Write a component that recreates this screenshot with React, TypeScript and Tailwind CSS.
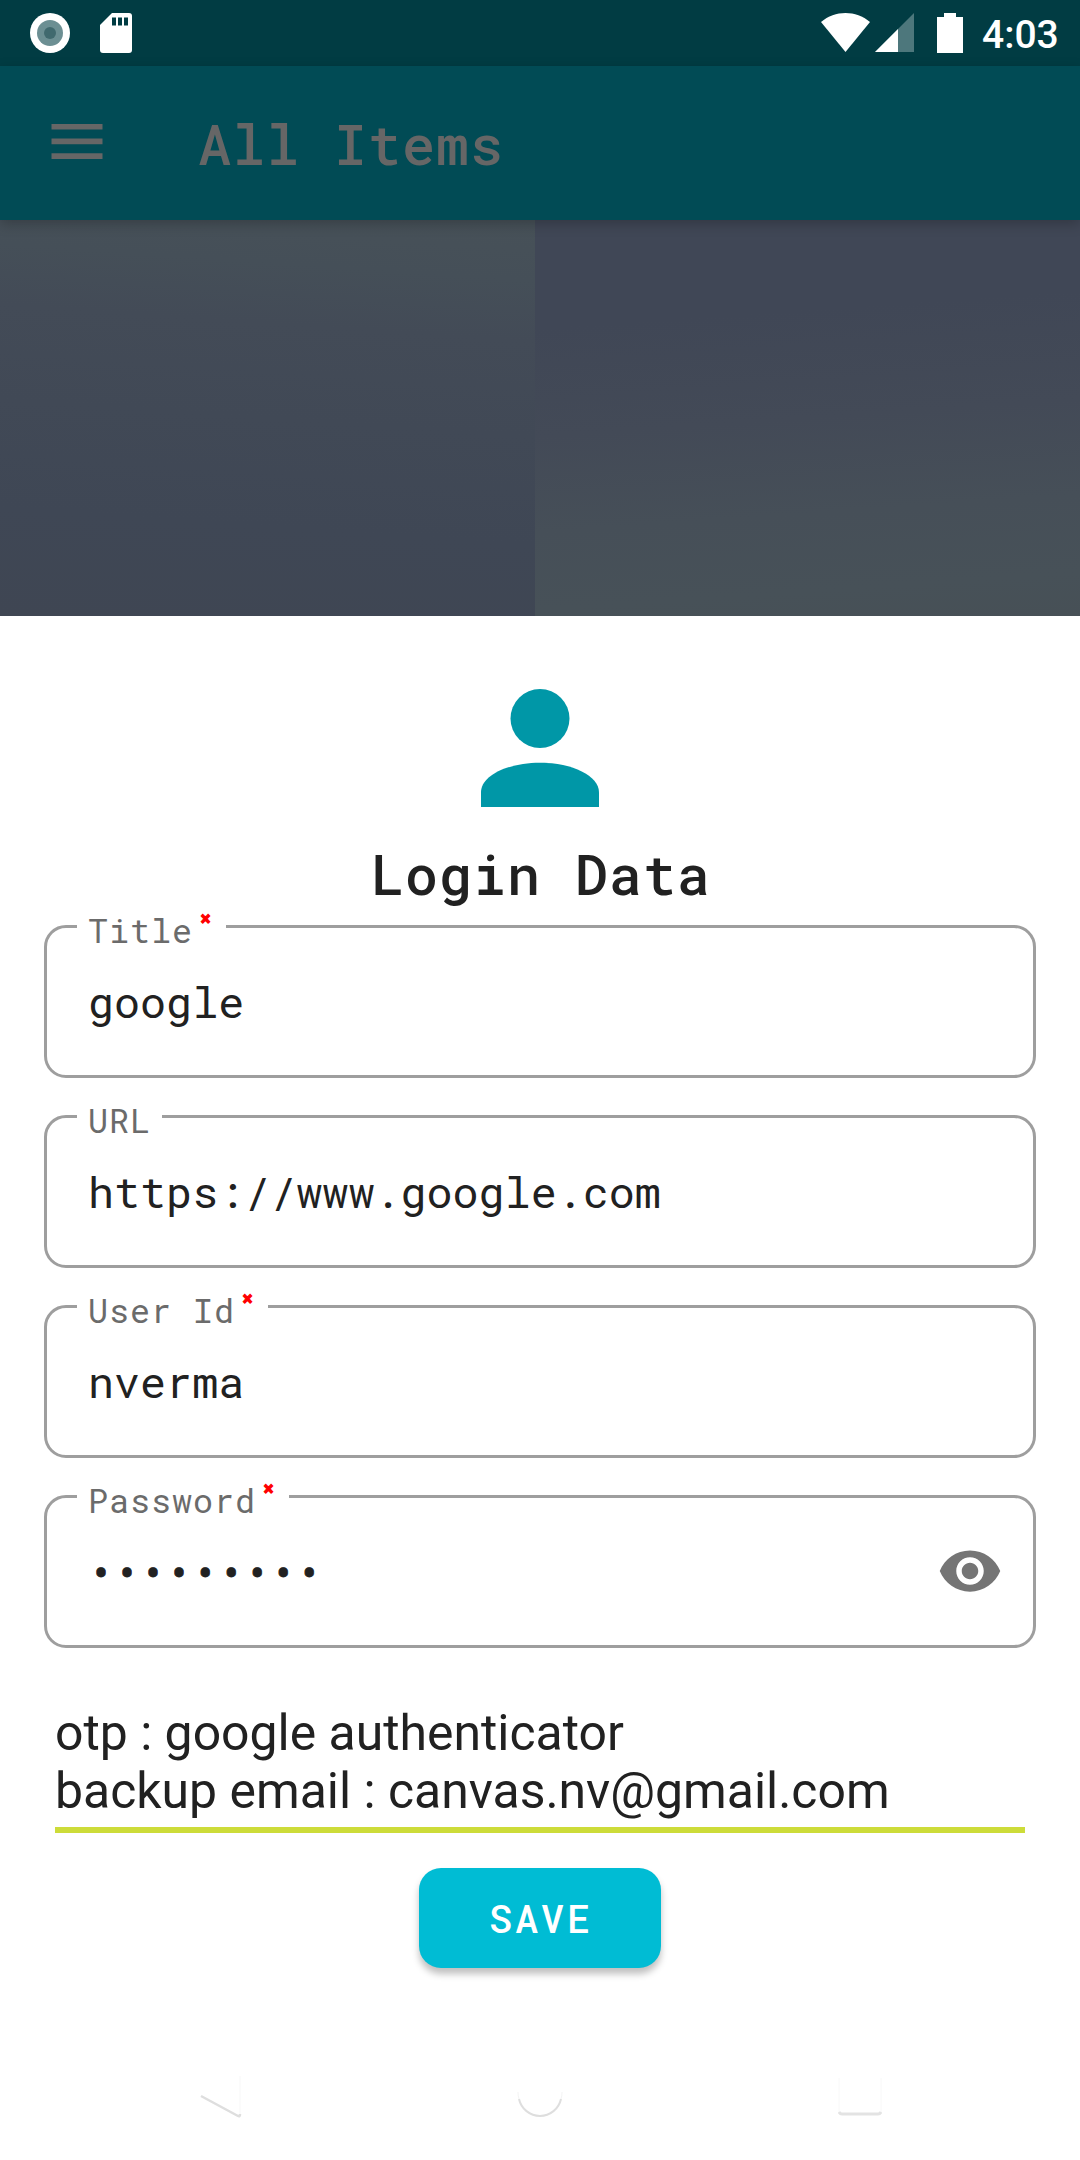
import type { ReactNode } from "react";

function StatusBar() {
  return (
    <div className="flex h-[66px] items-start bg-[#013c43] pt-[13px] pl-[30px] text-white">
      <svg className="h-10 w-10" viewBox="0 0 40 40">
        <circle cx="20" cy="20" r="20" fill="#fff" />
        <circle cx="20" cy="20" r="13" fill="#6c8f93" />
        <circle cx="20" cy="20" r="6" fill="#40696e" />
      </svg>
      <svg className="ml-[30px] h-10 w-8" viewBox="0 0 32 40">
        <path d="M12 0h17a3 3 0 0 1 3 3v34a3 3 0 0 1-3 3H3a3 3 0 0 1-3-3V12z" fill="#fff" />
        <path d="M12 4.500h4v8h-4zM18 4.500h4v8h-4zM24 4.500h4v8h-4z" fill="#013c43" />
      </svg>
      <svg className="ml-[689px] h-10 w-[49px]" viewBox="0 0 49 40">
        <path d="M0 9C14-3 35-3 49 9L24.500 39z" fill="#fff" />
      </svg>
      <svg className="ml-[5px] h-10 w-[39px]" viewBox="0 0 39 40">
        <path d="M39 0v39H0z" fill="#4d777c" />
        <path d="M23 16v23H0z" fill="#fff" />
      </svg>
      <svg className="ml-[23px] h-10 w-[26px]" viewBox="0 0 26 40">
        <path d="M7 0h12v4h7v36H0V4h7z" fill="#fff" />
      </svg>
      <span className="ml-[19px] pt-px font-['Roboto',sans-serif] text-[39px] leading-[42px] font-medium">4:03</span>
    </div>
  );
}

function Field({ label, required, children }: { label: string; required?: boolean; children: ReactNode }) {
  return (
    <div className="h-[172px]">
      <div className="relative flex h-[153px] items-center justify-between rounded-[22px] border-[3px] border-[#9e9e9e] pr-[30px] pl-[41px] text-[43.400px] leading-[52px] text-[#212121]">
        <div className="absolute -top-[18px] left-[30px] flex h-10 bg-white pr-[11px] pl-[11px]">
          <span className="text-[33.400px] leading-10 tracking-[0.96px] text-[#6b6b6b]">{label}</span>
          {required && (
            <span className="ml-[7px] w-[15px] text-[18px] leading-[16px] font-black text-[#f00] [-webkit-text-stroke:1.2px_#f00]">×</span>
          )}
        </div>
        {children}
      </div>
    </div>
  );
}

export default function App() {
  return (
    <div className="flex h-[2160px] w-[1080px] flex-col overflow-hidden bg-white font-['Roboto_Mono','Liberation_Mono',monospace]">
      <StatusBar />
      <header className="relative z-10 flex h-[154px] items-center bg-[#014b55] shadow-[0_4px_12px_rgba(0,0,0,0.22)]">
        <svg className="mt-[-4px] ml-[51px] h-[35px] w-[52px]" viewBox="0 0 52 35" fill="#666">
          <path d="M0.500 0h51v5.500h-51zM0.500 14.600h51v5.600h-51zM0.500 29.300h51V35h-51z" />
        </svg>
        <h1 className="mt-px ml-[95px] text-[55px] leading-[72px] font-medium tracking-[1px] text-[#666]">All Items</h1>
      </header>
      <div className="flex h-[396px]">
        <div className="w-[535px] bg-[linear-gradient(184deg,#475158_0%,#454f58_14%,#434b57_28%,#414956_50%,#3f4755_75%,#3f4653_100%)]" />
        <div className="flex-1 bg-[linear-gradient(176deg,#404756_0%,#404756_25%,#434a57_50%,#464f58_72%,#475158_90%,#475056_100%)]" />
      </div>
      <main className="flex flex-col items-center px-11 pt-[73px]">
        <svg className="h-[118px] w-[118px]" viewBox="4 4 16 16" fill="#0097a7">
          <circle cx="12" cy="8" r="4" />
          <path d="M12 14c-4.420 0-8 1.790-8 4v2h16v-2c0-2.210-3.580-4-8-4z" />
        </svg>
        <h2 className="mt-[31px] h-[87px] pl-[2px] text-[55px] leading-[72px] font-medium tracking-[1px] text-[#212121]">Login Data</h2>
        <div className="flex w-full flex-col gap-[18px]">
          <Field label="Title" required>google</Field>
          <Field label="URL">https://www.google.com</Field>
          <Field label="User Id" required>nverma</Field>
          <Field label="Password" required>
            <span className="[-webkit-text-stroke:0.8px_#212121]">•••••••••</span>
            <svg className="mb-[2px] h-[66px] w-[66px]" viewBox="0 0 24 24" fill="#757575">
              <path d="M12 4.500C7 4.500 2.730 7.610 1 12c1.730 4.390 6 7.500 11 7.500s9.270-3.110 11-7.500c-1.730-4.390-6-7.500-11-7.500zM12 17c-2.760 0-5-2.240-5-5s2.240-5 5-5 5 2.240 5 5-2.240 5-5 5zm0-8c-1.660 0-3 1.340-3 3s1.340 3 3 3 3-1.340 3-3-1.340-3-3-3z" />
            </svg>
          </Field>
        </div>
        <div className="mt-[37px] h-[129px] w-[970px] border-b-[6px] border-[#cddc39] font-['Roboto',sans-serif] text-[49.900px] leading-[58px] text-[#212121]">
          <p>otp : google authenticator</p>
          <p>backup email : canvas.nv@gmail.com</p>
        </div>
        <button className="mt-[35px] h-[100px] w-[242px] rounded-[22px] bg-[#00bcd4] pt-[2px] pl-[2px] text-[38.500px] font-medium tracking-[2.900px] text-white shadow-[0_6px_7px_rgba(0,0,0,0.25)]">SAVE</button>
      </main>
      <nav className="mt-[98px] flex justify-between pr-[198px] pl-[200px]">
        <svg className="h-14 w-[42px]" viewBox="0 0 42 56" fill="none">
          <path d="M1 30l37 20q2 1 2-2" stroke="#dedede" strokeWidth="2.500" />
          <path d="M40 10v38" stroke="#f7f7f7" />
        </svg>
        <svg className="h-14 w-12" viewBox="0 0 48 56" fill="none">
          <path d="M3 33a21.500 21.500 0 0 0 42 0" stroke="#dedede" strokeWidth="2" />
          <path d="M2 26q0 4 1 7M46 26q0 4-1 7" stroke="#f4f4f4" />
        </svg>
        <svg className="h-14 w-11" viewBox="0 0 44 56" fill="none">
          <path d="M1 12v34M43 12v34" stroke="#f8f8f8" />
          <path d="M1 46q1 2 3 2h36q2 0 3-2" stroke="#e3e3e3" strokeWidth="3" />
        </svg>
      </nav>
    </div>
  );
}
